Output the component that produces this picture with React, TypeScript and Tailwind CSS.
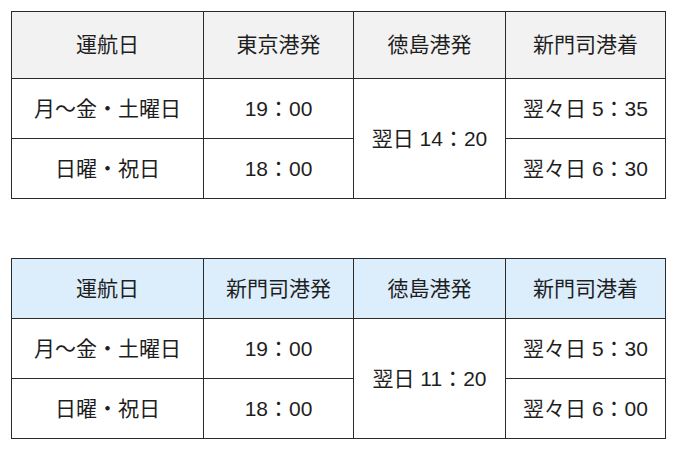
import React from "react";

type Data = {
  head: string[];
  headBg: string;
  headH: string;
  mid: string;
  arr: [string, string];
};

const tables: Data[] = [
  {
    head: ["運航日", "東京港発", "徳島港発", "新門司港着"],
    headBg: "bg-[#f2f2f2]",
    headH: "h-[67px]",
    mid: "翌日 14：20",
    arr: ["翌々日 5：35", "翌々日 6：30"],
  },
  {
    head: ["運航日", "新門司港発", "徳島港発", "新門司港着"],
    headBg: "bg-[#dcedfc]",
    headH: "h-[60px]",
    mid: "翌日 11：20",
    arr: ["翌々日 5：30", "翌々日 6：00"],
  },
];

const cell = "border border-[#2a2a2a] text-center align-middle p-0";

function Table({ d }: { d: Data }) {
  return (
    <table className="border-collapse table-fixed w-[654px] text-[21px] text-[#1e1e1e]">
      <colgroup>
        <col className="w-[192px]" />
        <col className="w-[150px]" />
        <col className="w-[152px]" />
        <col className="w-[160px]" />
      </colgroup>
      <thead>
        <tr className={`${d.headH} ${d.headBg}`}>
          {d.head.map((h, i) => (
            <th key={i} className={`${cell} font-normal`}>
              {h}
            </th>
          ))}
        </tr>
      </thead>
      <tbody>
        <tr className="h-[60px]">
          <td className={cell}>月〜金・土曜日</td>
          <td className={cell}>19：00</td>
          <td className={cell} rowSpan={2}>
            {d.mid}
          </td>
          <td className={cell}>{d.arr[0]}</td>
        </tr>
        <tr className="h-[60px]">
          <td className={cell}>日曜・祝日</td>
          <td className={cell}>18：00</td>
          <td className={cell}>{d.arr[1]}</td>
        </tr>
      </tbody>
    </table>
  );
}

export default function App() {
  return (
    <div
      className="w-[680px] h-[454px] bg-white pt-[11px] pl-[11px] flex flex-col gap-[59px]"
      style={{ fontFamily: '"Liberation Sans", Arial, "Noto Sans CJK JP", sans-serif' }}
    >
      {tables.map((t, i) => (
        <Table key={i} d={t} />
      ))}
    </div>
  );
}
